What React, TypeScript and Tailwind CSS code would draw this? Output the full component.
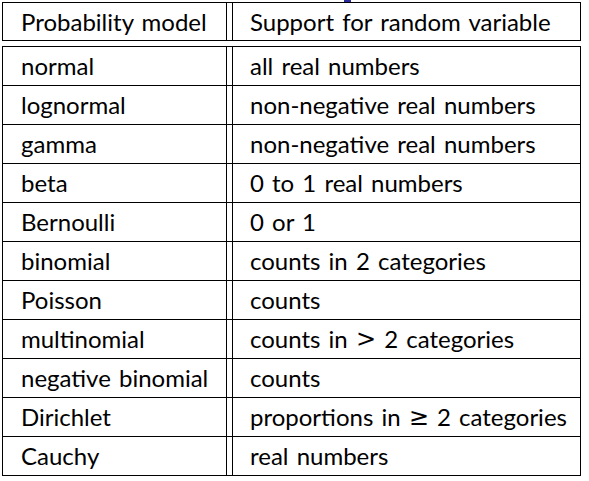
import type { ReactNode } from "react";

const Sym = ({ c }: { c: string }) => (
  <span className="text-[24px]" style={{ fontFamily: "'DejaVu Sans', sans-serif" }}>
    {c}
  </span>
);

const rows: [string, ReactNode][] = [
  ["normal", "all real numbers"],
  ["lognormal", "non-negative real numbers"],
  ["gamma", "non-negative real numbers"],
  ["beta", "0 to 1 real numbers"],
  ["Bernoulli", "0 or 1"],
  ["binomial", "counts in 2 categories"],
  ["Poisson", "counts"],
  ["multinomial", <>counts in <Sym c=">" /> 2 categories</>],
  ["negative binomial", "counts"],
  ["Dirichlet", <>proportions in <Sym c={"\u2265"} /> 2 categories</>],
  ["Cauchy", "real numbers"],
];

function Row({ left, right, className = "" }: { left: string; right: ReactNode; className?: string }) {
  return (
    <div className={`flex ${className}`}>
      <div className="w-[224px] shrink-0 border-r border-black pl-[18px] flex items-center">{left}</div>
      <div className="w-[5px] shrink-0" />
      <div className="flex-1 border-l border-black pl-[17px] flex items-center whitespace-pre">{right}</div>
    </div>
  );
}

export default function App() {
  return (
    <div
      className="relative w-[589px] h-[481px] bg-white pt-[2px] pl-[2px] text-[24px] text-black leading-none [word-spacing:2px]"
      style={{ fontFamily: "Lato, 'Noto Sans', sans-serif" }}
    >
      <div className="absolute left-[344px] top-0 w-[7px] h-[2px] bg-[#2a2a9a]" />
      <div className="w-[579px] border border-black">
        <Row className="h-[37px]" left="Probability model" right="Support for random variable" />
      </div>
      <div className="w-[579px] mt-[5px] border border-black divide-y divide-black">
        {rows.map(([l, r]) => (
          <Row key={l} className="h-[39px] last:h-[38px]" left={l} right={r} />
        ))}
      </div>
    </div>
  );
}
